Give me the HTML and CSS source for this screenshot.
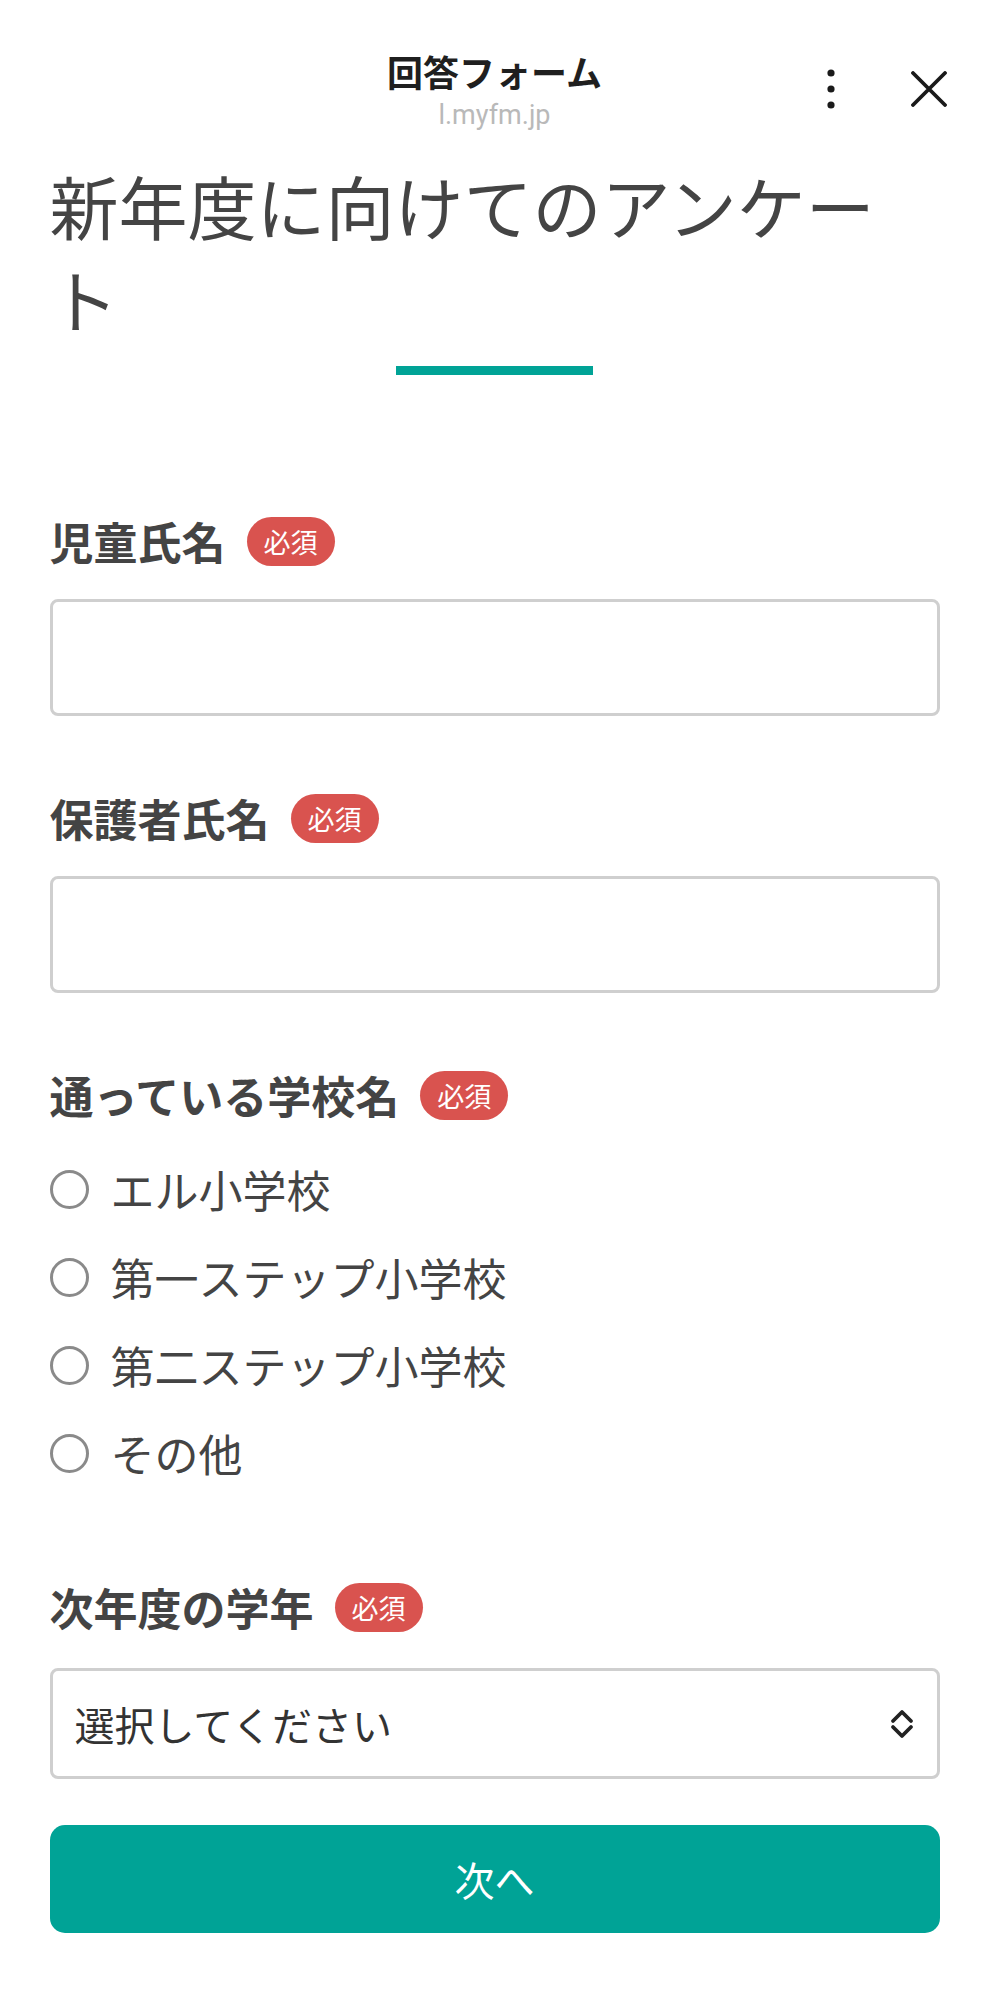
FILE: index.html
```html
<!DOCTYPE html>
<html lang="ja">
<head>
<meta charset="utf-8">
<title>回答フォーム</title>
<link rel="stylesheet" href="styles.css">
</head>
<body>
<header class="topbar">
  <div class="topbar-spacer"></div>
  <div class="topbar-center">
    <div class="topbar-title">回答フォーム</div>
    <div class="topbar-url">l.myfm.jp</div>
  </div>
  <div class="topbar-actions">
    <svg class="icon-kebab" width="8" height="40" viewBox="0 0 8 40" aria-hidden="true">
      <circle cx="4" cy="4" r="3.6" fill="#1a1a1a"/>
      <circle cx="4" cy="20" r="3.6" fill="#1a1a1a"/>
      <circle cx="4" cy="36" r="3.6" fill="#1a1a1a"/>
    </svg>
    <svg class="icon-close" width="36" height="36" viewBox="0 0 36 36" aria-hidden="true">
      <path d="M2 2 L34 34 M34 2 L2 34" stroke="#1a1a1a" stroke-width="3.8" stroke-linecap="round" fill="none"/>
    </svg>
  </div>
</header>

<main class="form">
  <h1 class="form-title">新年度に向けてのアンケート</h1>
  <div class="form-title-bar"></div>

  <section class="field field-first">
    <div class="field-label"><span class="field-label-text">児童氏名</span><span class="badge">必須</span></div>
    <div class="text-input"></div>
  </section>

  <section class="field">
    <div class="field-label"><span class="field-label-text">保護者氏名</span><span class="badge">必須</span></div>
    <div class="text-input"></div>
  </section>

  <section class="field field-radio">
    <div class="field-label"><span class="field-label-text">通っている学校名</span><span class="badge">必須</span></div>
    <ul class="radio-list">
      <li class="radio-item"><span class="radio-circle"></span><span class="radio-text">エル小学校</span></li>
      <li class="radio-item"><span class="radio-circle"></span><span class="radio-text">第一ステップ小学校</span></li>
      <li class="radio-item"><span class="radio-circle"></span><span class="radio-text">第二ステップ小学校</span></li>
      <li class="radio-item"><span class="radio-circle"></span><span class="radio-text">その他</span></li>
    </ul>
  </section>

  <section class="field field-last">
    <div class="field-label"><span class="field-label-text">次年度の学年</span><span class="badge">必須</span></div>
    <div class="select-box">
      <span class="select-text">選択してください</span>
      <svg class="select-chevron" width="24" height="32" viewBox="0 0 24 32" aria-hidden="true">
        <path d="M3 13 L12 4 L21 13 M3 19 L12 28 L21 19" stroke="#222" stroke-width="3.8" stroke-linecap="round" stroke-linejoin="round" fill="none"/>
      </svg>
    </div>
  </section>

  <div class="submit-button">次へ</div>
</main>
</body>
</html>
```

FILE: styles.css
```css
* {
  box-sizing: border-box;
}

body {
  margin: 0;
  background: #ffffff;
  font-family: "Noto Sans CJK JP", "Noto Sans", sans-serif;
  color: #444444;
}

.topbar {
  display: grid;
  grid-template-columns: 1fr auto 1fr;
  padding-top: 48px;
}

.topbar-center {
  text-align: center;
}

.topbar-title {
  font-size: 36px;
  line-height: 46px;
  font-weight: 700;
  color: #1f1f1f;
}

.topbar-url {
  margin-top: 3px;
  font-family: "Roboto", "Noto Sans", sans-serif;
  font-size: 27px;
  line-height: 36px;
  color: #b9b9b9;
}

.topbar-actions {
  display: flex;
  justify-content: flex-end;
  align-items: center;
  height: 40px;
  margin-top: 21px;
  padding-right: 42px;
  gap: 76px;
}

.icon-kebab,
.icon-close {
  display: block;
  flex: none;
}

.form {
  padding: 0 49.5px;
}

.form-title {
  margin: 26px 0 0;
  font-size: 69px;
  line-height: 93px;
  font-weight: 400;
  color: #444444;
}

.form-title-bar {
  width: 197px;
  height: 9px;
  margin: 21px auto 0;
  background: #00a396;
}

.field {
  margin-bottom: 69px;
}

.field-first {
  margin-top: 133px;
}

.field-radio {
  margin-bottom: 77px;
}

.field-last {
  margin-bottom: 46px;
}

.field-label {
  display: flex;
  align-items: center;
  gap: 21px;
  height: 66px;
}

.field-label-text {
  font-size: 44px;
  line-height: 66px;
  font-weight: 700;
  color: #444444;
}

.badge {
  display: inline-block;
  width: 88px;
  height: 49px;
  border-radius: 25px;
  background: #d9534f;
  color: #ffffff;
  font-size: 27px;
  line-height: 49px;
  text-align: center;
}

.text-input {
  margin-top: 25px;
  height: 117px;
  border: 3px solid #cfcfcf;
  border-radius: 8px;
  background: #ffffff;
}

.radio-list {
  list-style: none;
  margin: 17px 0 0;
  padding: 0;
}

.radio-item {
  display: flex;
  align-items: center;
  gap: 22px;
  height: 88px;
}

.radio-circle {
  flex: none;
  width: 39px;
  height: 39px;
  border: 3px solid #8a8a8a;
  border-radius: 50%;
}

.radio-text {
  font-size: 44px;
  line-height: 60px;
  color: #444444;
}

.select-box {
  display: flex;
  align-items: center;
  justify-content: space-between;
  margin-top: 28px;
  height: 111px;
  padding: 0 23px 0 22px;
  border: 3px solid #cfcfcf;
  border-radius: 8px;
}

.select-text {
  font-size: 40px;
  line-height: 56px;
  color: #333333;
}

.select-chevron {
  display: block;
  flex: none;
}

.submit-button {
  height: 108px;
  border-radius: 15px;
  background: #00a396;
  color: #ffffff;
  font-size: 40px;
  line-height: 108px;
  text-align: center;
}
```
